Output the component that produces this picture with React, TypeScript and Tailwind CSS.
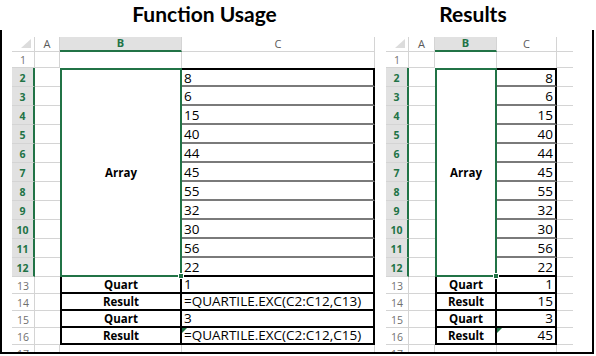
import React from 'react';

const values = ['8', '6', '15', '40', '44', '45', '55', '32', '30', '56', '22'];
const labels = ['Quart', 'Result', 'Quart', 'Result'];
const formulas = ['1', '=QUARTILE.EXC(C2:C12,C13)', '3', '=QUARTILE.EXC(C2:C12,C15)'];
const results = ['1', '15', '3', '45'];

const rows = Array.from({ length: 17 }, (_, i) => i + 1);

function RowHead({ n }: { n: number }) {
  if (n === 17) {
    return (
      <div className="flex justify-center overflow-hidden pt-[4px] border-r border-[#d4d4d4] text-[10.5px] leading-none text-[#6f6f6f]">
        {n}
      </div>
    );
  }
  const sel = n >= 2 && n <= 12;
  return (
    <div
      className={
        sel
          ? 'flex items-center justify-center pt-[2px] bg-[#e1e1e1] border-r-2 border-r-[#217346] border-b border-b-[#d4d4d4] text-[10.5px] leading-none font-bold text-[#217346]'
          : 'flex items-center justify-center pt-[2px] border-r border-b border-[#d4d4d4] text-[10.5px] leading-none text-[#6f6f6f]'
      }
    >
      {n}
    </div>
  );
}

function ColA({ n }: { n: number }) {
  if (n === 1) return <div className="border-r border-b border-[#d4d4d4]" />;
  if (n === 17) return <div className="border-r border-[#d4d4d4]" />;
  return <div className="border-b border-[#d4d4d4]" />;
}

function ColB({ n }: { n: number }) {
  if (n === 1 || n === 17) return <div className="border-r border-[#d4d4d4]" />;
  if (n === 2) {
    return (
      <div className="relative z-10 row-span-11 flex items-center justify-center border-2 border-[#217346] text-[11.5px] font-bold">
        Array
        <span className="absolute -right-[4px] -bottom-[4px] h-[6px] w-[6px] border border-white bg-[#217346]" />
      </div>
    );
  }
  if (n >= 13 && n <= 16) {
    return (
      <div className="flex items-center justify-center pt-[1px] border-l-2 border-r-2 border-b-2 border-black text-[11.5px] leading-none font-bold">
        {labels[n - 13]}
      </div>
    );
  }
  return null;
}

function ColC({ n, right }: { n: number; right: boolean }) {
  const align = right ? 'justify-end pr-[2px]' : 'justify-start pl-[2px]';
  if (n === 1) return <div className="border-r border-[#d4d4d4]" />;
  if (n === 17) return <div className="border-r border-[#d4d4d4]" />;
  if (n <= 12) {
    const line =
      n === 2
        ? 'border-t-2 border-t-black border-b-2 border-b-[#7a7a7a]'
        : n === 12
          ? 'border-b-2 border-b-black'
          : 'border-b-2 border-b-[#7a7a7a]';
    return (
      <div className={`flex items-center pt-[2px] border-r-2 border-r-black text-[13.5px] leading-none ${align} ${line}`}>
        {values[n - 2]}
      </div>
    );
  }
  const text = right ? results[n - 13] : formulas[n - 13];
  return (
    <div className={`relative flex items-center pt-[1px] border-r-2 border-b-2 border-black text-[13.5px] leading-none ${align}`}>
      {n === 16 && (
        <span className="absolute top-0 left-0 h-0 w-0 border-t-[5px] border-r-[5px] border-t-[#217346] border-r-transparent" />
      )}
      {text}
    </div>
  );
}

function Sheet({ right = false }: { right?: boolean }) {
  return (
    <div
      className={
        right
          ? 'grid grid-cols-[23px_26px_62px_60px_16px] grid-rows-[15px_16px_repeat(11,19px)_repeat(4,17px)_7px]'
          : 'grid grid-cols-[23px_25px_122px_193px] grid-rows-[15px_16px_repeat(11,19px)_repeat(4,17px)_7px]'
      }
    >
      {/* column headers */}
      <div className="relative border-r border-b border-[#d4d4d4]">
        <svg className="absolute right-[3px] bottom-[3px]" width="10" height="9" viewBox="0 0 10 9">
          <polygon points="10,0 10,9 0,9" fill="#dcdcdc" />
        </svg>
      </div>
      <div className="flex items-center justify-center border-r border-b border-[#d4d4d4] text-[11px] text-[#5a5a5a]">A</div>
      <div className="flex items-center justify-center bg-[#e1e1e1] border-r border-r-[#d4d4d4] border-b-2 border-b-[#217346] text-[11px] font-bold text-[#217346]">
        B
      </div>
      <div className="flex items-center justify-center border-r border-b border-[#d4d4d4] text-[11px] text-[#5a5a5a]">C</div>
      {right && <div className="border-b border-[#d4d4d4]" />}

      {rows.map((n) => (
        <React.Fragment key={n}>
          <RowHead n={n} />
          <ColA n={n} />
          <ColB n={n} />
          <ColC n={n} right={right} />
          {right && <div className={n === 17 ? '' : 'border-b border-[#d4d4d4]'} />}
        </React.Fragment>
      ))}
    </div>
  );
}

export default function App() {
  return (
    <div className="h-[356px] w-[596px] overflow-hidden bg-white font-['Open_Sans',sans-serif] text-black">
      <div className="flex h-[30px] font-['Lato',sans-serif] text-[21px] leading-[28px] font-bold">
        <div className="w-[409px] text-center">Function Usage</div>
        <div className="w-[128px] text-center">Results</div>
      </div>
      <div className="flex h-[324px] w-[594px] gap-[11px] border-r-2 border-b-2 border-l-2 border-black pt-[7px] pl-[10px]">
        <Sheet />
        <Sheet right />
      </div>
    </div>
  );
}
